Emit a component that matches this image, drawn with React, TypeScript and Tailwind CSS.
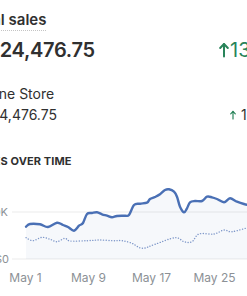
import React from "react";

type Pt = [number, number];

const current: Pt[] = [
  [16, 41.7], [20, 39], [30, 39.3], [38, 42], [47, 37.7], [53, 40], [58, 42], [64, 45.7],
  [69, 40.7], [73, 38], [77, 29], [82, 28], [87, 27.3], [92, 29.3], [97, 30.7], [102, 32.3],
  [107, 31], [115, 30.7], [119, 30], [124, 20], [130, 18.7], [137, 17.7], [140, 14], [145, 12],
  [150, 9.3], [155, 5], [159, 4.3], [164, 6.7], [167, 11.7], [170, 21.7], [174, 27.3], [177, 23.3],
  [180, 17.3], [185, 16], [192, 16], [197, 11.7], [202, 12.3], [207, 14], [214, 17.3], [220, 13.3],
  [227, 16.7], [234, 19], [240, 20.5],
];

const previous: Pt[] = [
  [16, 52.7], [23, 55.7], [32, 52.3], [40, 54.3], [47, 56.7], [55, 53.3], [60, 56], [77, 55.7],
  [90, 55], [103, 55.7], [112, 55.7], [122, 58.3], [132, 63.3], [145, 59.3], [165, 52.7],
  [174, 56.7], [182, 56.7], [189, 49], [204, 49], [214, 45], [222, 46.7], [240, 42],
];

// catmull-rom -> cubic bezier so the lines come out soft
function smooth(pts: Pt[]) {
  let d = `M${pts[0][0]},${pts[0][1]}`;
  for (let i = 0; i < pts.length - 1; i++) {
    const p0 = pts[i - 1] || pts[i];
    const p1 = pts[i];
    const p2 = pts[i + 1];
    const p3 = pts[i + 2] || p2;
    const c1x = p1[0] + (p2[0] - p0[0]) / 6;
    const c1y = p1[1] + (p2[1] - p0[1]) / 6;
    const c2x = p2[0] - (p3[0] - p1[0]) / 6;
    const c2y = p2[1] - (p3[1] - p1[1]) / 6;
    d += ` C${c1x.toFixed(1)},${c1y.toFixed(1)} ${c2x.toFixed(1)},${c2y.toFixed(1)} ${p2[0]},${p2[1]}`;
  }
  return d;
}

function ArrowUp({ className }: { className?: string }) {
  return (
    <svg viewBox="0 0 10 16" fill="none" stroke="currentColor" strokeWidth={2} strokeLinecap="round" strokeLinejoin="round" className={className}>
      <path d="M5 14.5V2" />
      <path d="M1.2 6L5 2l3.8 4" />
    </svg>
  );
}

export default function App() {
  const line = smooth(current);
  const area = `${line} L240,74 L16,74 Z`;
  const dates = ["May 1", "May 9", "May 17", "May 25"];

  return (
    <div className="w-[247px] h-[296px] overflow-hidden bg-white text-[#303030] font-['Inter',sans-serif]">
      <div className="w-[300px]">
        {/* Total sales */}
        <div className="pt-[7px] ml-[-31px]">
          <span className="inline-block text-[15px] leading-[20px] font-semibold border-b border-dotted border-[#c4c4c4]">
            Total sales
          </span>
        </div>
        <div className="mt-[5px] flex items-center">
          <span className="ml-[-13px] w-[232px] text-[20px] leading-[28px] font-semibold tracking-[-0.3px]">$24,476.75</span>
          <span className="flex items-center text-[#29845a] text-[20px] leading-[28px]">
            <ArrowUp className="w-[10px] h-[16px] mr-[1px]" />
            13%
          </span>
        </div>

        {/* Online Store */}
        <div className="mt-[20px] ml-[-27px] text-[14px] leading-[20px]">Online Store</div>
        <div className="mt-[1px] flex items-center text-[14px] leading-[20px]">
          <span className="ml-[-18px] w-[248px]">$24,476.75</span>
          <span className="flex items-center gap-[5px]">
            <ArrowUp className="w-[6px] h-[10px] text-[#29845a]" />
            13%
          </span>
        </div>

        {/* chart */}
        <div className="mt-[28px] ml-[-28px] text-[11px] leading-[16px] font-bold tracking-[0.1px]">SALES OVER TIME</div>
        <div className="mt-[16px] flex items-start">
          <div className="w-[10px] flex flex-col items-end text-[11px] leading-[14px] text-[#8c9196]">
            <span className="mt-[20px] mr-[2px] whitespace-nowrap">$10K</span>
            <span className="mt-[33px] mr-[1px] whitespace-nowrap">$0</span>
          </div>
          <svg width="237" height="80" viewBox="0 0 237 80" className="block shrink-0">
            <line x1="2" y1="27" x2="237" y2="27" stroke="#ebebeb" strokeWidth="1" />
            <line x1="2" y1="74" x2="237" y2="74" stroke="#ebebeb" strokeWidth="1" />
            <path d={area} fill="#4a72b8" fillOpacity="0.05" />
            <path d={smooth(previous)} fill="none" stroke="#7e97c9" strokeWidth="1.4" strokeDasharray="0.1 2.6" strokeLinecap="round" />
            <path d={line} fill="none" stroke="#4a70b5" strokeWidth="2.4" strokeLinecap="round" strokeLinejoin="round" />
          </svg>
        </div>
        <div className="mt-[4px] ml-[-6px] flex text-[12px] leading-[16px] text-[#8c9196]">
          {dates.map((d) => (
            <span key={d} className="w-[63px] text-center">{d}</span>
          ))}
        </div>
      </div>
    </div>
  );
}
